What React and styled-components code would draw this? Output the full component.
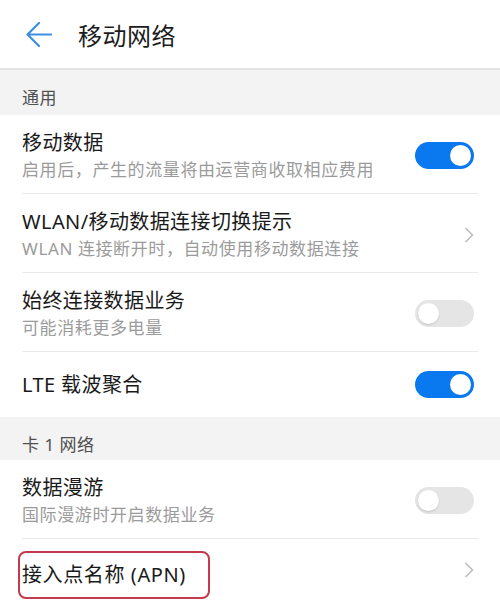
import React from 'react';
import styled, { createGlobalStyle } from 'styled-components';

const GlobalStyle = createGlobalStyle`
    html, body {
        margin: 0;
        padding: 0;
        background: #fff;
        font-family: "Noto Sans", "Noto Sans CJK SC", sans-serif;
    }
`;

const Page = styled.div`
    width: 500px;
    height: 602px;
    overflow: hidden;
    background: #fff;
`;

const Header = styled.header`
    height: 68px;
    display: flex;
    align-items: center;
    padding-left: 25px;
    border-bottom: 2px solid #e4e4e4;
`;

const BackButton = styled.div`
    width: 27px;
    height: 27px;
    display: flex;
    align-items: center;
    justify-content: center;
    margin-right: 26px;
`;

const Title = styled.h1`
    margin: 0;
    font-size: 24px;
    font-weight: 400;
    color: #1c1c1c;
    letter-spacing: 0.5px;
`;

const SectionHeader = styled.div`
    background: #f3f3f3;
    padding: 17px 22px ${p => p.$bottom || 6}px;
    font-size: 17px;
    line-height: 22px;
    color: #505050;
    letter-spacing: 0.5px;
`;

const Row = styled.div`
    margin: 0 22px;
    min-height: ${p => p.$height || 51}px;
    padding: ${p => (p.$single ? '0' : '15px 0 12px')};
    display: flex;
    align-items: center;
    justify-content: space-between;
    border-bottom: ${p => (p.$last ? 'none' : '1px solid #e9e9e9')};
`;

const Texts = styled.div`
    display: flex;
    flex-direction: column;
`;

const ItemTitle = styled.div`
    font-size: 20px;
    line-height: 26px;
    color: #1a1a1a;
    letter-spacing: 0.4px;
`;

const Highlight = styled.span`
    display: inline-block;
    margin: 10px 0 0 -4px;
    padding: 9px 22px 9px 2px;
    border: 2px solid #c23a4b;
    border-radius: 8px;
    font-size: 20px;
    line-height: 26px;
    color: #1a1a1a;
    letter-spacing: 0.6px;
`;

const Sub = styled.div`
    margin-top: 3px;
    font-size: 17px;
    line-height: 22px;
    color: #9b9b9b;
    letter-spacing: 0.6px;
`;

const Track = styled.div`
    width: 59px;
    height: 27px;
    border-radius: 14px;
    background: ${p => (p.$on ? '#0a79f0' : '#e5e5e5')};
    margin-right: 4px;
    display: flex;
    align-items: center;
    justify-content: ${p => (p.$on ? 'flex-end' : 'flex-start')};
    padding: 0 3px;
    box-sizing: border-box;
    flex-shrink: 0;
`;

const Knob = styled.div`
    width: 21px;
    height: 21px;
    border-radius: 50%;
    background: #fff;
    box-shadow: ${p => (p.$on ? 'none' : '0 1px 2px rgba(0,0,0,0.15)')};
`;

const Chevron = styled.svg`
    width: 10px;
    height: 16px;
    margin-right: 4px;
    flex-shrink: 0;
`;

const Toggle = ({ on }) => (
    <Track $on={on}>
        <Knob $on={on} />
    </Track>
);

const Arrow = () => (
    <Chevron viewBox="0 0 10 16">
        <polyline points="1.5,1 8.5,8 1.5,15" fill="none" stroke="#bdbdbd" strokeWidth="1.6" />
    </Chevron>
);

export default function App() {
    return (
        <Page>
            <GlobalStyle />
            <Header>
                <BackButton>
                    <svg width="27" height="27" viewBox="0 0 27 27">
                        <path d="M26 13.5H3M14 2L2.5 13.5 14 25" fill="none" stroke="#3a8fe0" strokeWidth="2.2" strokeLinecap="round" strokeLinejoin="round" />
                    </svg>
                </BackButton>
                <Title>移动网络</Title>
            </Header>

            <SectionHeader>通用</SectionHeader>
            <Row>
                <Texts>
                    <ItemTitle>移动数据</ItemTitle>
                    <Sub>启用后，产生的流量将由运营商收取相应费用</Sub>
                </Texts>
                <Toggle on />
            </Row>
            <Row>
                <Texts>
                    <ItemTitle>WLAN/移动数据连接切换提示</ItemTitle>
                    <Sub>WLAN 连接断开时，自动使用移动数据连接</Sub>
                </Texts>
                <Arrow />
            </Row>
            <Row>
                <Texts>
                    <ItemTitle>始终连接数据业务</ItemTitle>
                    <Sub>可能消耗更多电量</Sub>
                </Texts>
                <Toggle />
            </Row>
            <Row $single $height={65} $last>
                <ItemTitle>LTE 载波聚合</ItemTitle>
                <Toggle on />
            </Row>

            <SectionHeader $bottom={4}>卡 1 网络</SectionHeader>
            <Row>
                <Texts>
                    <ItemTitle>数据漫游</ItemTitle>
                    <Sub>国际漫游时开启数据业务</Sub>
                </Texts>
                <Toggle />
            </Row>
            <Row $single $height={62} $last>
                <Highlight>接入点名称 (APN)</Highlight>
                <Arrow />
            </Row>
        </Page>
    );
}
